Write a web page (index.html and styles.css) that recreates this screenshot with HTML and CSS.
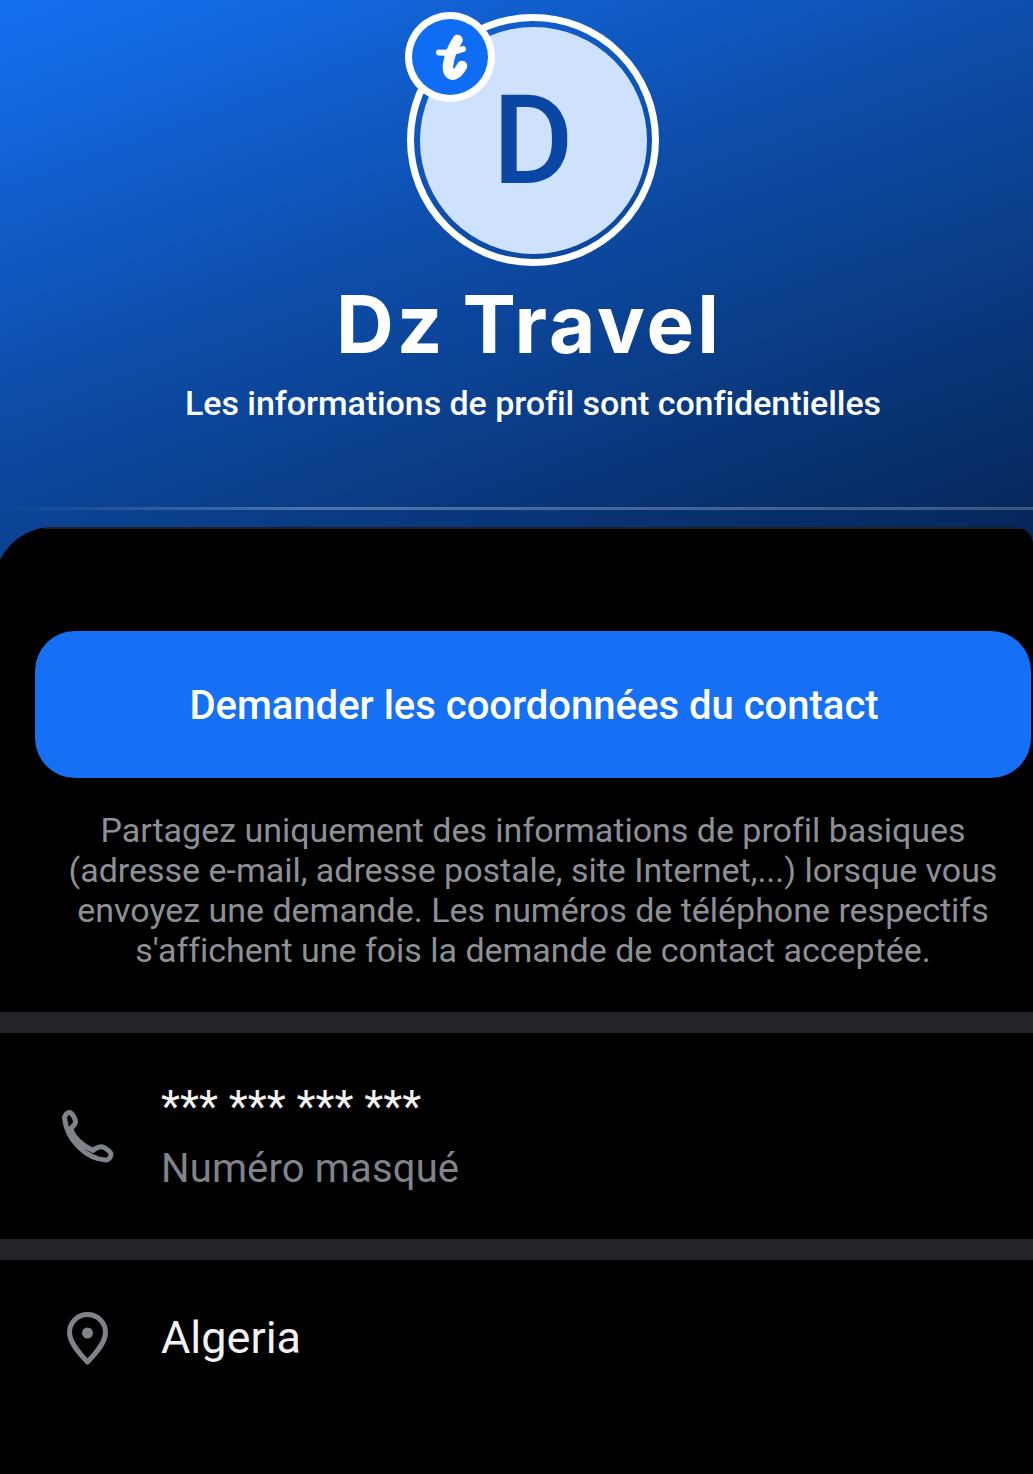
FILE: index.html
```html
<!DOCTYPE html>
<html lang="fr">
<head>
<meta charset="utf-8">
<title>Dz Travel</title>
<link rel="stylesheet" href="styles.css">
</head>
<body>
<div class="page">
  <header class="hero">
    <div class="hero-main">
      <div class="avatar-wrap">
        <div class="avatar"><span class="initial">D</span></div>
        <div class="badge">
          <svg viewBox="0 0 90 90" width="90" height="90" aria-hidden="true">
            <circle cx="45" cy="45" r="45" fill="#fff"/>
            <circle cx="45" cy="45" r="38" fill="#0f6df5"/>
            <path class="badge-stem" d="M52.500 28 C48 35 44 46 43 53 C42.500 60 45 63.500 49 62.500 C52 61.500 55 58 57 54"/>
            <path class="badge-bar" d="M34 40.500 C41 41 50 40 58 37"/>
          </svg>
        </div>
      </div>
      <h1 class="name">Dz Travel</h1>
      <p class="tagline">Les informations de profil sont confidentielles</p>
    </div>
    <div class="hero-line"></div>
  </header>
  <main class="card">
    <section class="cta">
      <button class="cta-button">Demander les coordonnées du contact</button>
      <p class="cta-note">Partagez uniquement des informations de profil basiques<br>(adresse e-mail, adresse postale, site Internet,...) lorsque vous<br>envoyez une demande. Les numéros de téléphone respectifs<br>s'affichent une fois la demande de contact acceptée.</p>
    </section>
    <div class="divider"></div>
    <section class="row row-phone">
      <svg class="row-icon" viewBox="0 0 54 54" width="54" height="54" aria-hidden="true">
        <path class="icon-line" d="M4.500 9 C5 5.500 7.500 3 10 3.500 C12.500 4.500 15.500 10 15.500 13 C15.500 16 12 18 10.500 20 C14 29 23 37 33 41.500 C35 39.500 40 37 43 38 C46.500 39.500 51 43 51 45.500 C51 48.500 48.500 51 46 51 C27 50 7 32 4.500 9 Z"/>
      </svg>
      <div class="row-text">
        <div class="stars">*** *** *** ***</div>
        <div class="hidden-label">Numéro masqué</div>
      </div>
    </section>
    <div class="divider"></div>
    <section class="row row-location">
      <svg class="row-icon" viewBox="0 0 54 54" width="54" height="54" aria-hidden="true">
        <path class="icon-line" d="M27.500 3.500 C17.500 3.500 9.500 11.500 9.500 21.500 C9.500 31 18 41 27.500 51 C37 41 45.500 31 45.500 21.500 C45.500 11.500 37.500 3.500 27.500 3.500 Z"/>
        <circle cx="27.500" cy="22" r="5.500" fill="#7f838a"/>
      </svg>
      <div class="location">Algeria</div>
    </section>
  </main>
</div>
</body>
</html>
```
FILE: styles.css
```css
* { box-sizing: border-box; }
html, body { margin: 0; padding: 0; background: #000; }
.page {
  width: 1033px;
  height: 1474px;
  overflow: hidden;
  font-family: Roboto, "Liberation Sans", sans-serif;
  background: linear-gradient(160deg, #1571f2 0%, #0e50b0 38%, #052352 100%) no-repeat;
  background-size: 100% 570px;
  color: #fff;
}
.hero {
  height: 527px;
  padding: 14px 0 17px;
  display: flex;
  flex-direction: column;
}
.hero-main {
  width: 1066px;
  display: flex;
  flex-direction: column;
  align-items: center;
}
.avatar-wrap { position: relative; width: 252px; height: 252px; }
.avatar {
  width: 252px;
  height: 252px;
  border-radius: 50%;
  border: 7px solid #fff;
  padding: 5.5px;
  background: #cfe2fd content-box;
  display: flex;
  align-items: center;
  justify-content: center;
}
.initial { font-size: 124px; font-weight: 500; color: #0a47a5; line-height: 1; margin-top: 1px; }
.badge { position: absolute; left: -2px; top: -2px; width: 90px; height: 90px; }
.badge svg { display: block; }
.badge-stem { fill: none; stroke: #fff; stroke-width: 10.5; stroke-linecap: round; stroke-linejoin: round; }
.badge-bar { fill: none; stroke: #fff; stroke-width: 6; stroke-linecap: round; }
.name {
  margin: 13px 8px 0 0;
  font-family: Inter, Lato, sans-serif;
  font-size: 80px;
  font-weight: 700;
  line-height: 90px;
  letter-spacing: 3px;
  word-spacing: -5px;
}
.tagline {
  margin: 14px 0 0;
  font-size: 34px;
  font-weight: 500;
  line-height: 40px;
  letter-spacing: -0.06px;
}
.hero-line {
  margin-top: auto;
  height: 3px;
  background: linear-gradient(90deg, rgba(255,255,255,0) 0%, rgba(255,255,255,.28) 30%, rgba(255,255,255,.22) 100%);
}
.card {
  width: 1039px;
  height: 947px;
  margin-left: -6px;
  background: linear-gradient(#1c2027, #1c2027) no-repeat 50px 0 / 100% 2px, #000;
  border-radius: 59px 18px 0 0;
}
.cta { padding: 104px 2px 0 41px; }
.cta-button {
  display: block;
  width: 100%;
  height: 147px;
  border: 0;
  border-radius: 40px;
  background: #1570f5;
  color: #fff;
  font-family: inherit;
  font-size: 40px;
  font-weight: 500;
  padding: 2px 0 0 2px;
}
.cta-note {
  margin: 32px 0 0 -35px;
  width: 1066px;
  text-align: center;
  font-size: 34px;
  line-height: 40px;
  letter-spacing: -0.02px;
  color: #8d9095;
  height: 202px;
}
.divider { height: 21px; background: #232427; }
.row { display: flex; align-items: center; padding-left: 66px; gap: 47px; }
.row-phone { height: 206px; }
.row-location { height: 156px; }
.row-icon { flex: none; }
.icon-line { fill: none; stroke: #7f838a; stroke-width: 5; stroke-linejoin: round; }
.row-text { display: flex; flex-direction: column; }
.stars { font-size: 44px; line-height: 56px; color: #f2f2f2; height: 68px; }
.hidden-label { font-size: 40px; line-height: 48px; color: #7f838a; letter-spacing: 0.15px; margin-top: -2px; }
.location { font-size: 45px; line-height: 56px; color: #f2f2f2; }
```
